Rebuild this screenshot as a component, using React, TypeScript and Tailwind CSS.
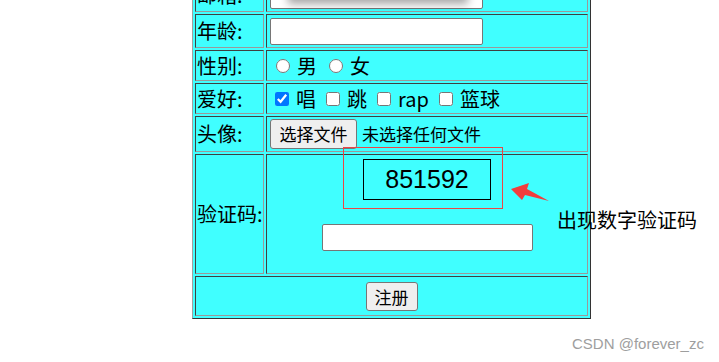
import React from 'react';

const cell =
  'border border-t-[#404040] border-l-[#404040] border-r-[#9a9a9a] border-b-[#9a9a9a] p-0 align-middle';
const label = `${cell} pl-[1px] leading-[26px] whitespace-nowrap`;
const value = `${cell} pl-[2px]`;
const textInput = 'block w-[213px] h-[27px] border border-[#767676] rounded-[2px] bg-white';

const Check = ({ checked, text }: { checked?: boolean; text: string }) => (
  <label className="flex items-center mr-[10px]">
    <input type="checkbox" defaultChecked={checked} className="w-[14px] h-[14px] m-0 mr-[7px] accent-[#0075ff]" />
    <span>{text}</span>
  </label>
);

const Radio = ({ text }: { text: string }) => (
  <label className="flex items-center mr-[12px]">
    <input type="radio" name="sex" className="w-[14px] h-[14px] m-0 mr-[7px]" />
    <span>{text}</span>
  </label>
);

export default function App() {
  return (
    <div className="relative w-[719px] h-[362px] overflow-hidden bg-white text-black font-['Noto_Sans_CJK_SC','Noto_Sans',sans-serif]">
      <table className="ml-[192px] mt-[-25px] w-[399px] table-fixed border-separate border-spacing-[2px] border border-t-[#a0a0a0] border-l-[#a0a0a0] border-r-[#333333] border-b-[#333333] bg-[#40ffff] text-[20px]">
        <tbody>
          <tr>
            <td className={`${label} w-[69px] h-[34px]`}>邮箱:</td>
            <td className={`${value} w-[322px] h-[34px]`}>
              <input className={`${textInput} ml-[1px]`} />
            </td>
          </tr>
          <tr>
            <td className={`${label} h-[34px]`}>年龄:</td>
            <td className={`${value} h-[34px]`}>
              <input className={`${textInput} ml-[1px]`} />
            </td>
          </tr>
          <tr>
            <td className={`${label} h-[31px]`}>性别:</td>
            <td className={`${value} h-[31px]`}>
              <div className="flex items-center pl-[7px] leading-[26px]">
                <Radio text="男" />
                <Radio text="女" />
              </div>
            </td>
          </tr>
          <tr>
            <td className={`${label} h-[31px]`}>爱好:</td>
            <td className={`${value} h-[31px]`}>
              <div className="flex items-center pl-[6px] leading-[26px]">
                <Check checked text="唱" />
                <Check text="跳" />
                <Check text="rap" />
                <Check text="篮球" />
              </div>
            </td>
          </tr>
          <tr>
            <td className={`${label} h-[36px]`}>头像:</td>
            <td className={`${value} h-[36px]`}>
              <div className="flex items-center pl-[1px] text-[17px]">
                <button className="w-[87px] h-[30px] border border-[#767676] rounded-[3px] bg-[#efefef] leading-[28px]">
                  选择文件
                </button>
                <span className="ml-[5px]">未选择任何文件</span>
              </div>
            </td>
          </tr>
          <tr>
            <td className={`${label} h-[120px]`}>验证码:</td>
            <td className={`${cell} h-[120px] align-top`}>
              <div className="flex flex-col items-center pt-[4px]">
                <div className="w-[128px] h-[41px] border border-black flex items-center justify-center font-['Liberation_Sans',Arial,sans-serif] text-[25px]">
                  851592
                </div>
                <input className="block mt-[24px] w-[211px] h-[27px] border border-[#767676] rounded-[2px] bg-white" />
              </div>
            </td>
          </tr>
          <tr>
            <td colSpan={2} className={`${cell} h-[40px]`}>
              <div className="flex justify-center">
                <button className="w-[52px] h-[29px] border border-[#767676] rounded-[3px] bg-[#efefef] text-[17px] leading-[27px]">
                  注册
                </button>
              </div>
            </td>
          </tr>
        </tbody>
      </table>

      {/* popup shadow falling on the first input */}
      <div className="absolute left-[288px] top-[-20px] w-[180px] h-[20px] bg-white shadow-[0_4px_8px_rgba(0,0,0,0.35)]" />

      {/* annotation */}
      <div className="absolute left-[343px] top-[147px] w-[160px] h-[62px] border border-[#ee4444]" />
      <svg className="absolute left-0 top-0" width="719" height="362">
        <path d="M511 189 L529 183 L527 189 L549 201 L525 195 L522 200 Z" fill="#f23d3d" />
      </svg>
      <div className="absolute left-[557px] top-[207px] text-[20px] leading-[26px] whitespace-nowrap">出现数字验证码</div>
      <div className="absolute left-[572px] top-[335px] text-[15px] leading-[18px] text-[#9e9e9e] font-['Liberation_Sans',Arial,sans-serif] whitespace-nowrap">
        CSDN @forever_zc
      </div>
    </div>
  );
}
